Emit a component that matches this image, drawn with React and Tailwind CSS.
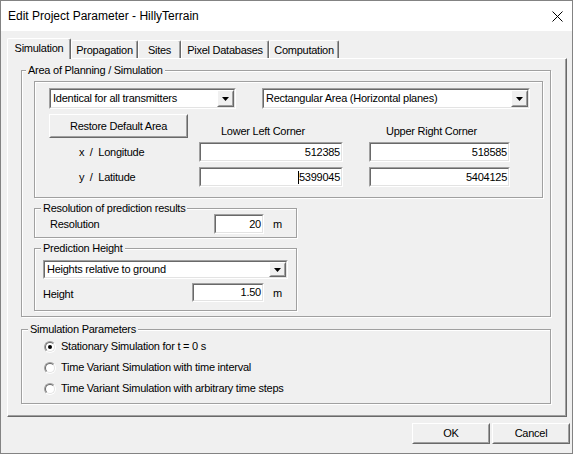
import React from "react";

function Sunken({ className = "", inner = "", children }) {
  return (
    <div className={`border border-t-[#a0a0a0] border-l-[#a0a0a0] border-r-white border-b-white ${className}`}>
      <div className={`h-full w-full border border-t-[#696969] border-l-[#696969] border-r-[#e3e3e3] border-b-[#e3e3e3] bg-white ${inner}`}>
        {children}
      </div>
    </div>
  );
}

function Raised({ className = "", children }) {
  return (
    <div className={`border border-t-white border-l-white border-r-[#696969] border-b-[#696969] bg-[#f0f0f0] ${className}`}>
      <div className="h-full w-full border border-t-[#f0f0f0] border-l-[#f0f0f0] border-r-[#a0a0a0] border-b-[#a0a0a0] flex items-center justify-center">
        {children}
      </div>
    </div>
  );
}

function Combo({ className = "", text }) {
  return (
    <Sunken className={className} inner="flex items-center">
      <span className="flex-1 pl-[2px] whitespace-nowrap overflow-hidden">{text}</span>
      <Raised className="w-[17px] h-full">
        <svg width="7" height="4" viewBox="0 0 7 4">
          <polygon points="0,0 7,0 3.5,4" fill="#000" />
        </svg>
      </Raised>
    </Sunken>
  );
}

function Field({ className = "", value, caret }) {
  return (
    <Sunken className={className} inner="flex items-center justify-end pr-[1px]">
      {caret && <span className="w-[1px] h-[13px] bg-black" />}
      <span>{value}</span>
    </Sunken>
  );
}

function Radio({ checked, label }) {
  return (
    <div className="h-[21px] flex items-center pl-[22px]">
      <div className="w-[12px] h-[12px] rounded-full border border-t-[#a0a0a0] border-l-[#a0a0a0] border-r-white border-b-white">
        <div className="w-full h-full rounded-full border border-t-[#696969] border-l-[#696969] border-r-[#e3e3e3] border-b-[#e3e3e3] bg-white flex items-center justify-center">
          {checked && <div className="w-[4px] h-[4px] rounded-full bg-black" />}
        </div>
      </div>
      <span className="ml-[5px] whitespace-nowrap">{label}</span>
    </div>
  );
}

const fieldsetCls =
  "border border-[#a0a0a0] shadow-[inset_1px_1px_0_#ffffff,1px_1px_0_#ffffff] p-0 m-0 min-w-0";

function Tab({ label, selected, w }) {
  if (selected) {
    return (
      <div
        className={`${w} h-[21px] -mb-[1px] bg-[#f0f0f0] border-t border-l border-r border-t-white border-l-white border-r-[#696969] rounded-t-[2px] shadow-[inset_-1px_0_0_#a0a0a0] flex items-start justify-center pt-[3px] relative z-10`}
      >
        {label}
      </div>
    );
  }
  return (
    <div
      className={`${w} h-[18px] bg-[#f0f0f0] border-t border-l border-r border-t-white border-l-white border-r-[#696969] rounded-t-[2px] shadow-[inset_-1px_0_0_#a0a0a0] flex items-center justify-center pt-[1px]`}
    >
      {label}
    </div>
  );
}

export default function App() {
  return (
    <div className="w-[573px] h-[454px] flex flex-col bg-[#f0f0f0] border border-[#838383] overflow-hidden font-['Liberation_Sans',Arial,sans-serif] text-[11px] leading-[13px] text-black tracking-[-0.25px]">
      {/* Title bar */}
      <div className="h-[30px] shrink-0 bg-white flex items-center pl-[7px] pr-[9px]">
        <span className="text-[12px] tracking-normal">Edit Project Parameter - HillyTerrain</span>
        <svg className="ml-auto" width="11" height="11" viewBox="0 0 11 11">
          <path d="M0.5 0.5 L10.5 10.5 M10.5 0.5 L0.5 10.5" stroke="#000" strokeWidth="1" />
        </svg>
      </div>

      {/* Body */}
      <div className="flex-1 flex flex-col pl-[6px] pt-[7px]">
        {/* Tabs */}
        <div className="flex items-end h-[20px] relative z-10">
          <Tab label="Simulation" selected w="w-[64px]" />
          <Tab label="Propagation" w="w-[67px]" />
          <Tab label="Sites" w="w-[43px]" />
          <Tab label="Pixel Databases" w="w-[88px]" />
          <Tab label="Computation" w="w-[70px]" />
        </div>

        {/* Panel */}
        <div className="w-[560px] h-[359px] border border-t-white border-l-white border-r-[#696969] border-b-[#696969] shadow-[inset_-1px_-1px_0_#a0a0a0] pl-[13px] pt-[5px]">
          <fieldset className={`${fieldsetCls} w-[530px]`}>
            <legend className="ml-[4px] px-[2px] bg-[#f0f0f0] leading-[13px]">Area of Planning / Simulation</legend>
            <div className="pl-[12px] pt-[4px] pb-[5px]">
              {/* etched box */}
              <div className="w-[509px] h-[117px] border border-[#a0a0a0] shadow-[inset_1px_1px_0_#ffffff,1px_1px_0_#ffffff] pl-[14px] pt-[6px]">
                <div className="flex">
                  <Combo className="w-[187px] h-[21px]" text="Identical for all transmitters" />
                  <Combo className="w-[268px] h-[21px] ml-[26px]" text="Rectangular Area (Horizontal planes)" />
                </div>
                <div className="flex items-end mt-[5px]">
                  <Raised className="w-[139px] h-[24px]">Restore Default Area</Raised>
                  <div className="w-[144px] ml-[11px] pl-[22px] whitespace-nowrap">Lower Left Corner</div>
                  <div className="w-[141px] ml-[26px] pl-[17px] whitespace-nowrap">Upper Right Corner</div>
                </div>
                <div className="flex items-center mt-[4px]">
                  <div className="w-[150px] pl-[30px] whitespace-pre">x  /  Longitude</div>
                  <Field className="w-[144px] h-[20px]" value="512385" />
                  <Field className="w-[141px] h-[20px] ml-[26px]" value="518585" />
                </div>
                <div className="flex items-center mt-[5px]">
                  <div className="w-[150px] pl-[30px] whitespace-pre">y  /  Latitude</div>
                  <Field className="w-[144px] h-[20px]" value="5399045" caret />
                  <Field className="w-[141px] h-[20px] ml-[26px]" value="5404125" />
                </div>
              </div>

              {/* Resolution */}
              <fieldset className={`${fieldsetCls} w-[263px] mt-[4px]`}>
                <legend className="ml-[6px] px-[2px] bg-[#f0f0f0] leading-[13px]">Resolution of prediction results</legend>
                <div className="flex items-center -mt-[1px] pb-[3px]">
                  <div className="w-[179px] pl-[15px]">Resolution</div>
                  <Field className="w-[50px] h-[20px]" value="20" />
                  <span className="ml-[9px]">m</span>
                </div>
              </fieldset>

              {/* Prediction Height */}
              <fieldset className={`${fieldsetCls} w-[263px] mt-[4px]`}>
                <legend className="ml-[6px] px-[2px] bg-[#f0f0f0] leading-[13px]">Prediction Height</legend>
                <div className="pl-[8px] pt-[5px] pb-[8px]">
                  <Combo className="w-[245px] h-[19px]" text="Heights relative to ground" />
                  <div className="flex items-center mt-[4px]">
                    <div className="w-[149px] pt-[3px]">Height</div>
                    <Field className="w-[72px] h-[19px]" value="1.50" />
                    <span className="ml-[9px] pt-[2px]">m</span>
                  </div>
                </div>
              </fieldset>
            </div>
          </fieldset>

          {/* Simulation Parameters */}
          <fieldset className={`${fieldsetCls} w-[530px] mt-[6px]`}>
            <legend className="ml-[6px] px-[2px] bg-[#f0f0f0] leading-[13px]">Simulation Parameters</legend>
            <div className="pb-[4px]">
              <Radio checked label="Stationary Simulation for t = 0 s" />
              <Radio label="Time Variant Simulation with time interval" />
              <Radio label="Time Variant Simulation with arbitrary time steps" />
            </div>
          </fieldset>
        </div>

        {/* Buttons */}
        <div className="flex justify-end gap-[2px] mt-[6px] pr-[2px]">
          <Raised className="w-[78px] h-[21px]">OK</Raised>
          <Raised className="w-[78px] h-[21px]">Cancel</Raised>
        </div>
      </div>
    </div>
  );
}
